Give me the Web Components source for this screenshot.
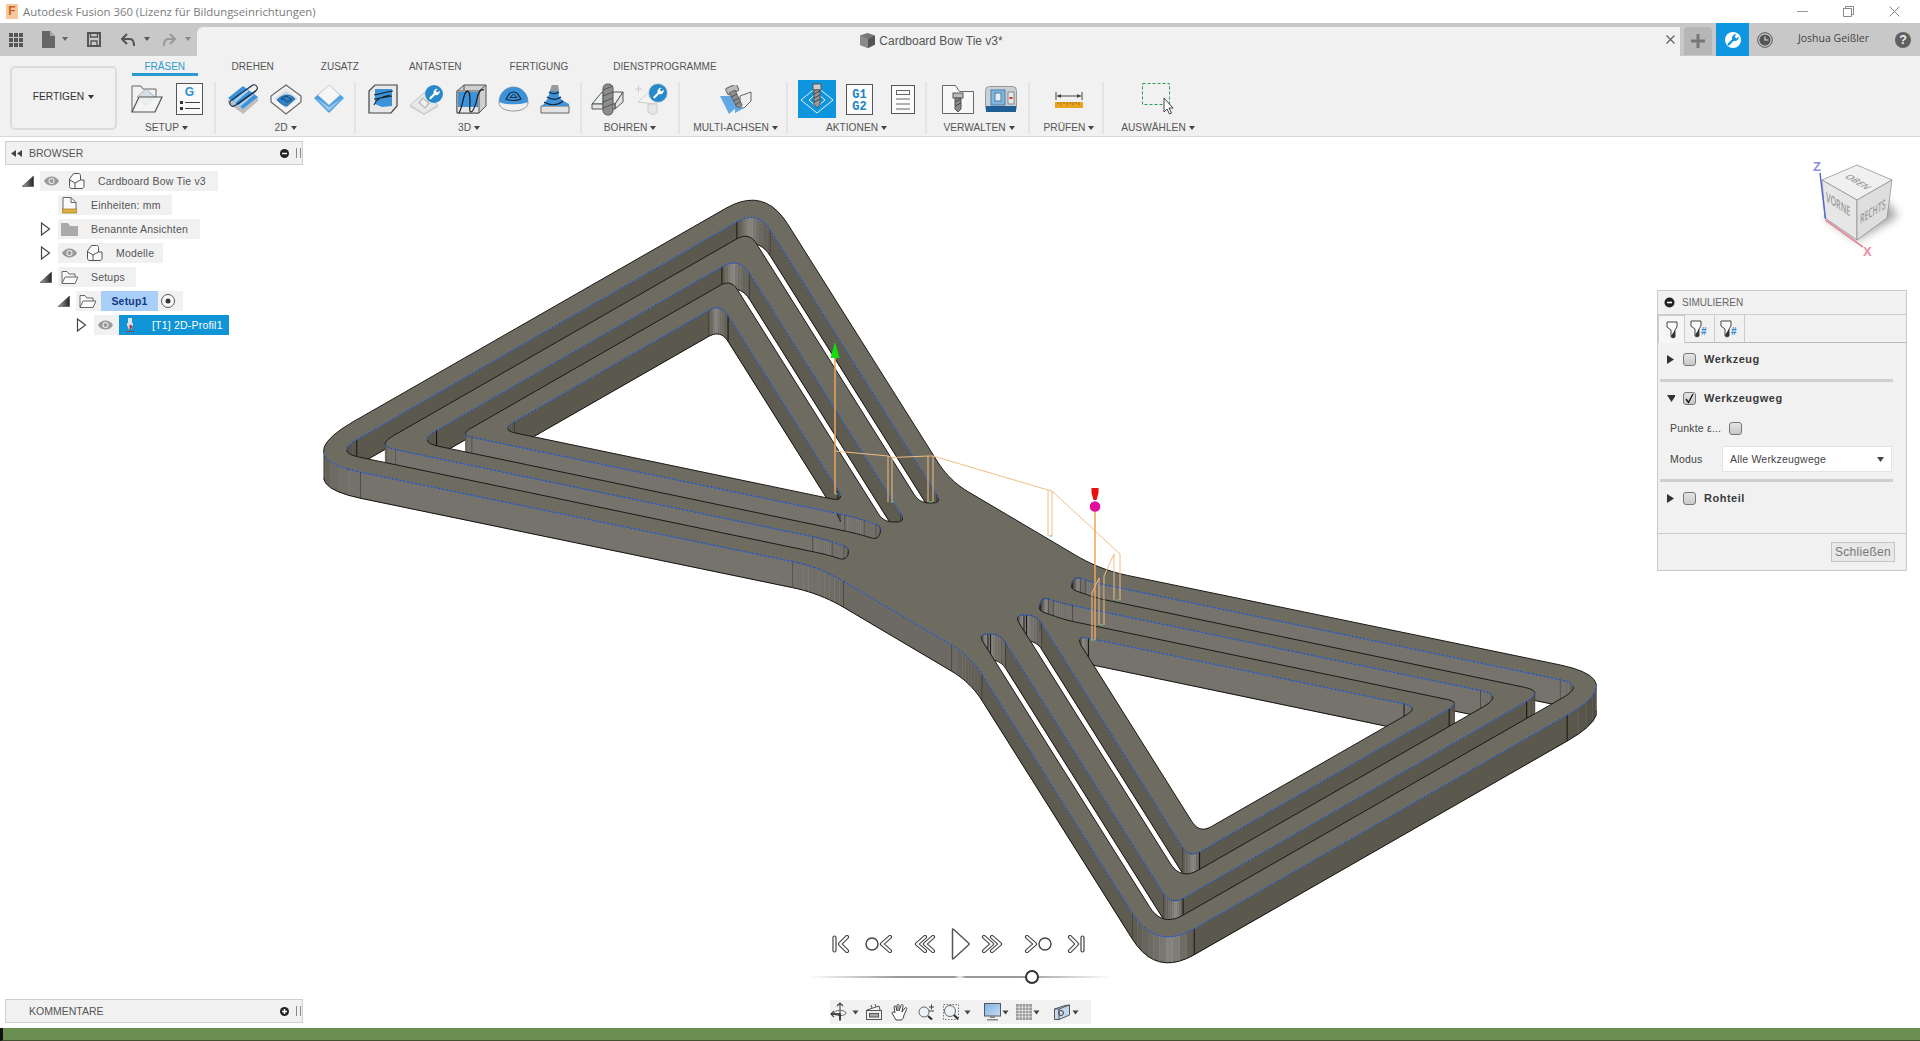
<!DOCTYPE html>
<html lang="de">
<head>
<meta charset="utf-8">
<title>Autodesk Fusion 360</title>
<style>
  html, body { margin: 0; height: 100%; overflow: hidden; background: #fff; }
  body { display: flex; flex-direction: column; font: 11px "Liberation Sans", Arial, sans-serif; color: #444; }
</style>
</head>
<body>
<f-titlebar></f-titlebar>
<f-topbar></f-topbar>
<f-ribbon>
  <f-tab slot="tabs" active>FRÄSEN</f-tab>
  <f-tab slot="tabs">DREHEN</f-tab>
  <f-tab slot="tabs">ZUSATZ</f-tab>
  <f-tab slot="tabs" style="margin-left:3px">ANTASTEN</f-tab>
  <f-tab slot="tabs" style="margin-left:1px">FERTIGUNG</f-tab>
  <f-tab slot="tabs" style="margin-left:-2px">DIENSTPROGRAMME</f-tab>
  <f-group label="SETUP" w="94" gap="13" style="padding-right:3px"><f-icon name="open"></f-icon><f-icon name="gdoc"></f-icon></f-group>
  <f-group label="2D" w="140" gap="11" shift="1"><f-icon name="adaptive"></f-icon><f-icon name="pocket"></f-icon><f-icon name="face"></f-icon></f-group>
  <f-group label="3D" w="226" gap="11" shift="2"><f-icon name="hex"></f-icon><f-icon name="probe"></f-icon><f-icon name="cube3"></f-icon><f-icon name="dome"></f-icon><f-icon name="stair"></f-icon></f-group>
  <f-group label="BOHREN" w="98" gap="10"><f-icon name="drill"></f-icon><f-icon name="drillplus"></f-icon></f-group>
  <f-group label="MULTI-ACHSEN" w="108" shift="5"><f-icon name="multi"></f-icon></f-group>
  <f-group label="AKTIONEN" w="139" gap="10"><f-icon name="simulate"></f-icon><f-icon name="g1g2"></f-icon><f-icon name="sheet" style="margin-left:8px"></f-icon></f-group>
  <f-group label="VERWALTEN" w="103" gap="11" shift="3"><f-icon name="toollib"></f-icon><f-icon name="machine"></f-icon></f-group>
  <f-group label="PRÜFEN" w="74" shift="6"><f-icon name="ruler"></f-icon></f-group>
  <f-group label="AUSWÄHLEN" w="108" last><f-icon name="select"></f-icon></f-group>
</f-ribbon>
<f-workspace>
  <f-panelbar title="BROWSER" back sign="minus"></f-panelbar>
  <f-tree>
    <f-tree-row depth="0" twist="open" pad="4" end="12"><f-icon name="eye"></f-icon><f-icon name="part" style="margin-left:10px"></f-icon><span style="margin-left:13px">Cardboard Bow Tie v3</span></f-tree-row>
    <f-tree-row depth="1" pad="4" end="11"><f-icon name="units"></f-icon><span style="margin-left:14px">Einheiten: mm</span></f-tree-row>
    <f-tree-row depth="1" twist="closed" pad="3" end="12"><f-icon name="folder"></f-icon><span style="margin-left:13px">Benannte Ansichten</span></f-tree-row>
    <f-tree-row depth="1" twist="closed" pad="4" end="9"><f-icon name="eye"></f-icon><f-icon name="part" style="margin-left:10px"></f-icon><span style="margin-left:13px">Modelle</span></f-tree-row>
    <f-tree-row depth="1" twist="open" pad="3" end="11"><f-icon name="folderopen"></f-icon><span style="margin-left:13px">Setups</span></f-tree-row>
    <f-tree-row depth="2" twist="open" pad="3" end="7"><f-icon name="folderopen"></f-icon><span style="margin-left:5px;width:57px;height:20px;line-height:20px;background:#a9cff9;color:#123a80;font-weight:bold;text-align:center">Setup1</span><f-icon name="radio" style="margin-left:2px"></f-icon></f-tree-row>
    <f-tree-row depth="3" twist="closed" pad="4" end="0"><f-icon name="eye"></f-icon><span style="margin-left:6px;width:110px;height:20px;background:#0f94d6;color:#fff;display:flex;align-items:center"><f-icon name="tool1" style="margin-left:7px"></f-icon><span style="margin-left:18px">[T1] 2D-Profil1</span></span></f-tree-row>
  </f-tree>
  <f-panelbar title="KOMMENTARE" sign="plus" slot="bottom"></f-panelbar>
</f-workspace>
<f-taskbar></f-taskbar>

<script>
const caret = (x, y, c = '#555') => `<path d="M${x} ${y}h6l-3 4z" fill="${c}"/>`
const chev = (d) => `<path d="${d}" fill="none" stroke="#444" stroke-width="4.2" stroke-linecap="round" stroke-linejoin="round"/><path d="${d}" fill="none" stroke="#fff" stroke-width="2" stroke-linecap="round" stroke-linejoin="round"/>`
const BLUE = '#3d92d8'

// every icon: [width, height, svg body]
const ICONS = {
  grid: [15, 14, [0, 5, 10].map(x => [0, 5, 10].map(y => `<rect x="${x}" y="${y}" width="4" height="4" fill="#555"/>`).join('')).join('')],
  file: [30, 17, `<path d="M0 0h8l5 5v12H0z" fill="#666"/><path d="M8 0v5h5" fill="#aaa"/>` + caret(20, 6, '#666')],
  save: [14, 15, `<path d="M1 1h12v13H1z" fill="none" stroke="#555" stroke-width="2"/><path d="M3.500 1h7v4h-7zM4 9h6v5H4z" fill="none" stroke="#555" stroke-width="1.4"/>`],
  undo: [32, 14, `<path d="M6 1 1 6l5 5M2 6h7c3 0 4 3 4 7" fill="none" stroke="#555" stroke-width="2"/>` + caret(23, 4)],
  redo: [32, 14, `<path d="M8 1l5 5-5 5M12 6H6C3 6 2 9 2 13" fill="none" stroke="#999" stroke-width="2"/>` + caret(23, 4, '#888')],
  box: [15, 15, `<path d="M7.500 0 15 2.500v9L8 15 0 12V2.500z" fill="#777"/><path d="M0 2.500 8 6v9l-8-3z" fill="#8b8b8b"/><path d="M8 6l7-3.500v9L8 15z" fill="#555"/>`],
  clock: [16, 16, `<circle cx="8" cy="8" r="7.300" fill="none" stroke="#555"/><circle cx="8" cy="8" r="5.600" fill="#555"/><path d="M8 4.500V8h3.500" fill="none" stroke="#ddd" stroke-width="1.200"/>`],
  wrench: [18, 18, `<circle cx="9" cy="9" r="8" fill="#fff"/><path d="M12.500 3.500a3.600 3.600 0 0 0-4.300 4.700l-4.400 4.400a1 1 0 0 0 1.600 1.600l4.400-4.400a3.600 3.600 0 0 0 4.700-4.300L12.400 7.600 10.400 5.600z" fill="#0e96e0"/>`],
  help: [16, 16, `<circle cx="8" cy="8" r="8" fill="#606060"/><text x="8" y="12.400" font-size="12.500" font-weight="bold" font-family="Liberation Sans" text-anchor="middle" fill="#eee">?</text>`],
  open: [32, 28, `<path d="M1 27V1h9l2 3h13v8" fill="none" stroke="#666"/><path d="M15 4 6 12l9 8 9-8z" fill="#d4dfe8" stroke="#999" stroke-width=".7"/><path d="M1 27 8 12h23l-7 15z" fill="#f4f4f4" fill-opacity=".75" stroke="#555" stroke-width="1.200"/>`],
  gdoc: [27, 32, `<rect x=".5" y=".5" width="26" height="31" fill="#fafafa" stroke="#555"/><text x="13.500" y="13" font-size="12" font-weight="bold" font-family="Liberation Sans" text-anchor="middle" fill="#2a8fd0">G</text><path d="M9 19.500h15M9 25.500h15" stroke="#444"/><rect x="4" y="18" width="3" height="3" fill="#333"/><rect x="4" y="24" width="3" height="3" fill="#333"/>`],
  adaptive: [32, 31, `<path d="M1 19 16 30 31 17v-4L16 25 1 15z" fill="#bdbdbd"/><path d="M1 14 16 2l15 11-15 12z" fill="${BLUE}"/><path d="M7 18 21 6M12 22 26 10" stroke="#a8cfee" stroke-width="2.500"/><path d="M25 1.500 4 16.500a3 3 0 0 0 4 5L29 6.500a3 3 0 0 0-4-5zM8 13.500 26 1M11 20 29 7" fill="none" stroke="#16324e" stroke-width="1.100"/>`],
  pocket: [32, 31, `<path d="M16 1 31 12v6L16 30 1 18v-6z" fill="#f5f5f5" stroke="#666" stroke-width="1.200"/><path d="M16 4 28 14 16 25 4 14z" fill="#e6e6e6"/><path d="M16 8 27 15 16 24 5 15z" fill="#bcd6ec"/><path d="M7 16c4-4 7-5 10-5s6 1 8 4l-8 7c-3 0-6-2-10-6z" fill="#2f82c4" stroke="#1d4f80" stroke-width=".6"/><path d="M11 15c3-2 5-3 6-3 2 3 4 3 5 3-2 2-4 3-5 3-2-3-4-3-6-3z" fill="none" stroke="#12406a"/>`],
  face: [32, 29, `<path d="M16 0 31 13 16 28 1 13z" fill="#4d9fe0"/><path d="M16 0 27 10 16 20 5 10z" fill="#f6f6f6" stroke="#c8c8c8" stroke-width=".6"/><path d="M16 22 3 13l13 13 13-13z" fill="#9cc9ec"/>`],
  hex: [30, 30, `<path d="M1 7 7 1h22v21l-6 7H1z" fill="#e8e8e8" stroke="#444" stroke-width="1.200"/><path d="M7 5h17v17l-10 1-7-3z" fill="${BLUE}"/><path d="M6 11c6-1 12-3 19-4M6 15c4 0 10-2 18-3M6 21c1-4 5-8 16-10" fill="none" stroke="#122" stroke-width="1.100"/>`],
  probe: [36, 31, `<path d="M1 21 15 9l14 12-14 9z" fill="#e8e8e8" stroke="#c4c4c4"/><path d="M1 21l14 9 14-9v2l-14 8-14-8z" fill="#cfcfcf"/><rect x="11" y="16" width="8" height="6" transform="rotate(40 15 19)" fill="#eee" stroke="#aaa"/><circle cx="25" cy="10" r="9" fill="#2789c9"/><path d="M29 5a3.600 3.600 0 0 0-4.400 4.600l-4 4a1 1 0 0 0 1.500 1.500l4-4a3.600 3.600 0 0 0 4.500-4.500L28.500 8.500l-1.900-1.900z" fill="#fff"/>`],
  cube3: [31, 30, `<path d="M1 7 8 1h22v21l-7 7H1z" fill="#cfcfcf" stroke="#555"/><path d="M1 7h22v22H1zM23 7l7-6" fill="#e6e6e6" stroke="#555"/><path d="M2 8h20v15H2z" fill="${BLUE}"/><path d="M8 1v5" stroke="#555"/><path d="M3 29c4-7 4-18 7-21s4 2 4 9-1 11 1 11 5-8 6-13 3-11 7-9" fill="none" stroke="#111" stroke-width="1.100"/>`],
  dome: [31, 26, `<path d="M1 17C1 7 8 1 15.500 1S30 7 30 17c0 5-7 8-14.500 8S1 22 1 17z" fill="#f0f0f0" stroke="#999"/><path d="M1 16C1 7 8 1 15.500 1S30 7 30 16c-6 3-23 3-29 0z" fill="${BLUE}"/><path d="M8 13c3-5 4-7 7.500-7S20 8 23 13c-4 2-11 2-15 0z" fill="none" stroke="#123" stroke-width="1.100"/><path d="M12 11.500 15.500 8 19 11.500z" fill="none" stroke="#123" stroke-width=".9"/>`],
  stair: [30, 30, `<path d="M1 22h28v7H1z" fill="#e2e2e2" stroke="#666"/><path d="M2 22c3-3 6-7 7-12l3-9h6l1 11c2 4 6 6 10 8v2z" fill="${BLUE}"/><path d="M12 1h6l1 6H10z" fill="#9a9a9a"/><path d="M7 13c5 3 10 3 14 0M9 8c3 2 7 2 10 0M4 18c7 4 14 3 19-1" fill="none" stroke="#123" stroke-width="1.100"/>`],
  drill: [33, 33, `<path d="M1 21 11 9h21l-8 12z" fill="#efefef" stroke="#555"/><path d="M1 21h23v5H1zM24 26l8-7V9l-8 12z" fill="#e4e4e4" stroke="#555"/><path d="M12 9h9v17h-9z" fill="#d6e8f6" stroke="#2a8fd0"/><rect x="12" y="1" width="10" height="31" rx="4.500" fill="#8d8d8d" stroke="#555"/><path d="M12 7l10-4M12 13l10-4M12 19l10-4M12 25l10-4" stroke="#555" fill="none"/>`],
  drillplus: [35, 33, `<path d="M4 19 13 11h16l-7 10z" fill="#f4f4f4" stroke="#d0d0d0"/><path d="M14 21h9v8l-4 3-5-3z" fill="#e6e6e6" stroke="#ccc"/><path d="M1 6h7M4.500 2.500v7" stroke="#ccc"/><circle cx="24" cy="10" r="9.500" fill="#2789c9" stroke="#ddd"/><path d="M28 5a3.600 3.600 0 0 0-4.400 4.600l-4 4a1 1 0 0 0 1.500 1.500l4-4a3.600 3.600 0 0 0 4.500-4.500L27.500 8.500l-1.900-1.900z" fill="#fff"/>`],
  multi: [33, 29, `<path d="M1 11h13l4 11-8 7z" fill="#62a8e4"/><path d="M21 11 32 7v9l-7 7h-4z" fill="#eee" stroke="#666"/><path d="M16 12l5 10 4 1-9 5z" fill="#62a8e4"/><rect x="7" y="1" width="12" height="7" rx="1.500" transform="rotate(-25 13 4)" fill="#bbb" stroke="#666"/><path d="M10 8 16 5l7 15c0 2-3 3-5 2z" fill="#8d8d8d" stroke="#666"/><path d="M12 12l6-3M14 16l6-3M16 20l5-3" stroke="#555" fill="none"/>`],
  simulate: [38, 38, `<rect width="38" height="38" fill="#0f94de"/><path d="M19 7 35 20 19 33 3 20z" fill="none" stroke="#e7f3fb"/><path d="M19 13 27 20 19 27 11 20z" fill="none" stroke="#e7f3fb"/><rect x="15" y="4" width="8" height="6" fill="#ccc" stroke="#555"/><path d="M16 10h6v14l-3 4-3-4z" fill="#999" stroke="#555"/><path d="M16 14l6-3M16 18l6-3M16 22l6-3" stroke="#444"/>`],
  g1g2: [27, 31, `<rect x=".5" y=".5" width="26" height="30" fill="#fbfbfb" stroke="#555"/><text x="13.500" y="14" font-size="12" font-weight="bold" font-family="Liberation Mono" text-anchor="middle" fill="#1d84c4">G1</text><text x="13.500" y="26" font-size="12" font-weight="bold" font-family="Liberation Mono" text-anchor="middle" fill="#1d84c4">G2</text>`],
  sheet: [24, 29, `<rect x=".5" y=".5" width="23" height="28" fill="#fbfbfb" stroke="#555"/><rect x="5.500" y="5.500" width="13" height="4" fill="none" stroke="#666"/><path d="M5 14h14M5 19h14M5 24h14" stroke="#666"/>`],
  toollib: [32, 29, `<path d="M.5 28.500V.5h13l4 6h14v22z" fill="#f7f7f7" stroke="#666"/><rect x="11" y="8" width="10" height="5" fill="#bbb" stroke="#555"/><path d="M13 13h6v11l-3 3-3-3z" fill="#888" stroke="#555"/><path d="M13 17l6-3M13 21l6-3" stroke="#444"/>`],
  machine: [32, 26, `<rect x=".5" y=".5" width="31" height="25" rx="4" fill="#c9d0d6" stroke="#999"/><rect x="1" y="20" width="30" height="6" fill="#1f5f96"/><rect x="6" y="4" width="14" height="15" fill="#7fb6df" stroke="#4f7ea3"/><rect x="10" y="7" width="6" height="8" fill="#e6eef5" stroke="#4f7ea3"/><rect x="23" y="6" width="6" height="12" fill="#e8e8e8" stroke="#888"/><rect x="24.500" y="11" width="3" height="2" fill="#c33"/>`],
  ruler: [28, 17, `<path d="M1 1v8M27 1v8M2 5h24" stroke="#444" fill="none"/><path d="M2 5l4-2v4zM26 5l-4-2v4z" fill="#444"/><rect y="11" width="28" height="6" fill="#e8a320"/><path d="M3 11v2M6 11v3M9 11v2M12 11v3M15 11v2M18 11v3M21 11v2M24 11v3" stroke="#8a5b10" stroke-width=".7"/>`],
  select: [32, 32, `<rect x=".5" y=".5" width="27" height="21" fill="none" stroke="#2e9a55" stroke-dasharray="3 2"/><path d="M22 15v14l3-3 2.500 5 2-1-2.500-5h4z" fill="#fff" stroke="#444"/>`],
  eye: [15, 10, `<path d="M0 5c3-6 12-6 15 0-3 6-12 6-15 0z" fill="#999"/><circle cx="7.500" cy="5" r="3" fill="#eee"/><circle cx="7.500" cy="5" r="2" fill="#999"/>`],
  part: [16, 16, `<path d="M3 15.500c-2 0-2.500-1-2.500-2V6l4-5.500h5c1.500 0 2 1 2 2V7H15v6.500c0 1-1 2-2 2zM6 15.500V10l5.500-3M6 10 1 7" fill="#fafafa" stroke="#555"/>`],
  units: [15, 17, `<path d="M1 12V.5h8l5 5V12" fill="#fafafa" stroke="#666"/><path d="M9 .5v5h5" fill="none" stroke="#666"/><rect y="12" width="15" height="4" fill="#e2b040" stroke="#8a6a10" stroke-width=".6"/>`],
  folder: [17, 13, `<path d="M0 0h7l2 3h8v10H0z" fill="#aaa"/>`],
  folderopen: [17, 13, `<path d="M1 12V.5h5l2 2.500h6v3" fill="#fafafa" stroke="#666"/><path d="M1 12.500 4 6h13l-3 6.500z" fill="#fafafa" stroke="#666"/>`],
  radio: [16, 16, `<circle cx="8" cy="8" r="6.500" fill="#fafafa" stroke="#555"/><circle cx="8" cy="8" r="2.500" fill="#333"/>`],
  tool1: [8, 15, `<rect x="2" y="0" width="4" height="5" fill="#d8e8f2"/><path d="M1 5h6v2L5 12H3L1 7z" fill="#ddd"/><path d="M4 7l2 1-2 4zM0 13.500h8" stroke="#aa3030" fill="#aa3030" stroke-width=".8"/>`],
  orbit: [20, 20, `<path d="M10 1v18M4 9l-3 3 3 3M7 4l3-3 3 3" fill="none" stroke="#444" stroke-width="1.100"/><ellipse cx="10" cy="11" rx="6" ry="2.600" fill="none" stroke="#666"/><path d="M1 12h9v6" fill="none" stroke="#222" stroke-width="1.400"/>`],
  lookat: [16, 16, `<rect x=".5" y="6.500" width="15" height="9" fill="#eee" stroke="#555"/><rect x="3.500" y="9.500" width="9" height="3.500" fill="#aaa" stroke="#555"/><path d="M1 6 13 2l1 4M5 1l1 3M9 0l1 3" fill="none" stroke="#555"/>`],
  hand: [17, 17, `<path d="M5 16 1 9c0-2 2-1 3 0L3 3c0-1.500 2-1.500 2 0l1 4V1.500C6 0 8 0 8 1.500V7l2-5.500c.5-1.500 2.500-1 2 .5L11 8l3-4c1-1 2.500 0 1.500 1.500L13 11c-.5 3-1.500 5-3 5z" fill="#fff" stroke="#444"/>`],
  zoom: [17, 16, `<circle cx="6" cy="8" r="5" fill="#eef3f7" stroke="#666"/><path d="M10 12l4 3.500" stroke="#333" stroke-width="2.200"/><path d="M11 3h5M13.500 .5v5M11 7h5" stroke="#444" fill="none"/>`],
  zoomfit: [17, 17, `<rect x=".5" y=".5" width="15" height="15" fill="none" stroke="#777" stroke-dasharray="1.500 1.500"/><circle cx="7" cy="7" r="5.500" fill="#eef3f7" stroke="#666"/><path d="M11 11l4 4" stroke="#333" stroke-width="2.200"/>`],
  display: [17, 18, `<defs><linearGradient id="d" x1="0" y1="0" x2="1" y2="1"><stop offset="0" stop-color="#7fb0e0"/><stop offset="1" stop-color="#c9def2"/></linearGradient></defs><rect x=".5" y=".5" width="16" height="12.500" fill="url(#d)" stroke="#556"/><path d="M6 13h5v2H6zM3 16h11v1.500H3z" fill="#888"/>`],
  gridbtn: [16, 16, `<rect width="16" height="16" fill="#999"/><path d="M3.200 0v16M6.400 0v16M9.600 0v16M12.800 0v16M0 3.200h16M0 6.400h16M0 9.600h16M0 12.800h16" stroke="#eee" stroke-width=".7"/>`],
  viewbox: [16, 16, `<path d="M.5 5 11 1.500 15.500 1v10L5 15.500H.5z" fill="#c2d8ec" stroke="#555"/><path d="M.5 5H5v10.500M5 5 15.500 1" fill="none" stroke="#555"/><circle cx="7" cy="9" r="2.500" fill="none" stroke="#444"/>`],
  start: [18, 18, `<rect x="1" y="1" width="3" height="16" rx="1.500" fill="#fff" stroke="#444" stroke-width="1.200"/>` + chev('M15 2 8 9l7 7')],
  prevop: [28, 18, `<circle cx="7" cy="9" r="6" fill="none" stroke="#444" stroke-width="1.400"/>` + chev('M25 2 17 9l8 7')],
  rew: [23, 18, chev('M12 2 4 9l8 7') + chev('M20 2 12 9l8 7')],
  play: [19, 32, `<path d="M1.500 1.500c0-.5.5-.5 1-.2L17.500 15c.8.700.8 1.300 0 2L2.500 30.700c-.5.300-1 .3-1-.2z" fill="#fff" stroke="#555" stroke-width="1.500"/>`],
  fwd: [23, 18, chev('M3 2l8 7-8 7') + chev('M11 2l8 7-8 7')],
  nextop: [28, 18, chev('M3 2l8 7-8 7') + `<circle cx="21" cy="9" r="6" fill="none" stroke="#444" stroke-width="1.400"/>`],
  end: [18, 18, chev('M3 2l7 7-7 7') + `<rect x="14" y="1" width="3" height="16" rx="1.500" fill="#fff" stroke="#444" stroke-width="1.200"/>`],
  cap: [7, 5, caret(.5, .5, '#444')],
}

class FIcon extends HTMLElement {
  connectedCallback() {
    const [w, h, body] = ICONS[this.getAttribute('name')]
    if (!this.shadowRoot) this.attachShadow({ mode: 'open' })
    this.shadowRoot.innerHTML = `<style>:host{display:inline-flex;flex:none;line-height:0}</style>
      <svg width="${w}" height="${h}" viewBox="0 0 ${w} ${h}">${body}</svg>`
  }
}
customElements.define('f-icon', FIcon)

class FTitlebar extends HTMLElement {
  constructor() {
    super()
    this.attachShadow({ mode: 'open' }).innerHTML = `
      <style>
        :host { display: flex; align-items: center; height: 23px; flex: none; background: #fff; padding-left: 6px; font: 11.350px "Open Sans", sans-serif; color: #7a7a7a; }
        .logo { width: 12px; height: 15px; background: #f6c79a; margin-right: 5px; color: #c8641a; font: bold 12px/15px "Liberation Sans"; text-align: center; }
        .title { flex: 1; }
        .win { display: flex; gap: 35px; padding-right: 20px; }
      </style>
      <span class="logo">F</span><span class="title">Autodesk Fusion 360 (Lizenz für Bildungseinrichtungen)</span>
      <span class="win">
        <svg width="11" height="11"><path d="M0 5.500h11" stroke="#999"/></svg>
        <svg width="11" height="11"><path d="M.5 2.500h8v8h-8zM2.500 2.500v-2h8v8h-2" fill="none" stroke="#888"/></svg>
        <svg width="11" height="11"><path d="M.5.500l10 10M10.500.500l-10 10" stroke="#888"/></svg>
      </span>`
  }
}
customElements.define('f-titlebar', FTitlebar)

class FTopbar extends HTMLElement {
  constructor() {
    super()
    this.attachShadow({ mode: 'open' }).innerHTML = `
      <style>
        :host { display: flex; height: 33px; flex: none; background: #c8c8c8; color: #444; }
        .tools { width: 197px; display: flex; align-items: center; padding-left: 9px; box-sizing: border-box; }
        .doc { flex: 1; margin-top: 4px; background: #f1f1f1; border-radius: 6px 0 0 0; display: flex; align-items: center; justify-content: center; position: relative; font-size: 12px; color: #555; gap: 4px; padding: 0 14px 2px 0; }
        .x { position: absolute; right: 5px; top: 8px; }
        .plus { width: 28px; margin: 4px 4px 1px; background: #b6b6b6; border-radius: 4px 4px 0 0; display: flex; align-items: center; justify-content: center; }
        .job { width: 33px; background: #0e96e0; display: flex; align-items: center; justify-content: center; }
        .name { width: 94px; text-align: center; font: 10.500px/30px "Open Sans", sans-serif; color: #444; margin-left: 13.500px; }
        .right { display: flex; align-items: center; }
      </style>
      <span class="tools">
        <f-icon name="grid"></f-icon>
        <f-icon name="file" style="margin-left:18px"></f-icon>
        <f-icon name="save" style="margin-left:15px"></f-icon>
        <f-icon name="undo" style="margin-left:20px"></f-icon>
        <f-icon name="redo" style="margin-left:9px"></f-icon>
      </span>
      <span class="doc"><f-icon name="box"></f-icon>Cardboard Bow Tie v3*
        <svg class="x" width="9" height="9"><path d="M.5.500l8 8M8.500.500l-8 8" stroke="#666" stroke-width="1.300"/></svg>
      </span>
      <span class="plus"><svg width="14" height="14"><path d="M7 0v14M0 7h14" stroke="#777" stroke-width="3"/></svg></span>
      <span class="job"><f-icon name="wrench"></f-icon></span>
      <span class="right" style="padding-left:8px"><f-icon name="clock"></f-icon></span>
      <span class="name">Joshua Geißler</span>
      <span class="right" style="padding:0 9px 0 14.500px"><f-icon name="help"></f-icon></span>`
  }
}
customElements.define('f-topbar', FTopbar)

class FRibbon extends HTMLElement {
  constructor() {
    super()
    this.attachShadow({ mode: 'open' }).innerHTML = `
      <style>
        :host { display: flex; flex: none; height: 81px; box-sizing: border-box; background: #f1f1f1; border-bottom: 1px solid #d9d9d9; padding-left: 10px; }
        .mode { width: 103px; height: 56px; margin-top: 10px; padding-bottom: 4px; box-sizing: content-box; border: 2px solid #dcdcdc; border-radius: 5px; display: flex; align-items: center; justify-content: center; gap: 4px; font-size: 10.200px; color: #333; }
        .mode i { border: 3px solid transparent; border-top: 4px solid #333; border-bottom: 0; margin-top: 1px; }
        .col { display: flex; flex-direction: column; margin-left: 5px; }
        .tabs { display: flex; gap: 21px; height: 21px; margin-top: 3px; }
        .groups { display: flex; flex: 1; }
      </style>
      <div class="mode">FERTIGEN <i></i></div>
      <div class="col">
        <div class="tabs"><slot name="tabs"></slot></div>
        <div class="groups"><slot></slot></div>
      </div>`
  }
}
customElements.define('f-ribbon', FRibbon)

class FTab extends HTMLElement {
  constructor() {
    super()
    this.attachShadow({ mode: 'open' }).innerHTML = `
      <style>
        :host { display: block; padding: 1px 13px 0; font-size: 10px; line-height: 13px; color: #555; height: 17px; box-sizing: border-box; }
        :host([active]) { color: #2a9ad0; border-bottom: 3px solid #2a9ad0; margin-left: 10px; padding: 1px 12.500px 0; }
      </style><slot></slot>`
  }
}
customElements.define('f-tab', FTab)

class FGroup extends HTMLElement {
  constructor() {
    super()
    this.attachShadow({ mode: 'open' }).innerHTML = `
      <style>
        :host { display: flex; flex-direction: column; box-sizing: border-box; border-right: 2px solid #e4e4e4; margin: 2px 0; height: 52px; }
        :host([last]) { border-right: 0; }
        .icons { height: 40px; margin-top: -3px; display: flex; align-items: center; justify-content: center; }
        .label { font-size: 10.200px; line-height: 13px; color: #555; display: flex; justify-content: center; align-items: center; gap: 3px; margin-top: 2px; }
        .label i { border: 3px solid transparent; border-top: 4px solid #444; border-bottom: 0; }
      </style>
      <div class="icons"><slot></slot></div>
      <div class="label"><span class="t"></span><i></i></div>`
  }
  connectedCallback() {
    this.shadowRoot.querySelector('.t').textContent = this.getAttribute('label')
    this.style.width = this.getAttribute('w') + 'px'
    this.style.paddingLeft = (this.getAttribute('shift') || 0) + 'px'
    this.shadowRoot.querySelector('.icons').style.gap = (this.getAttribute('gap') || 0) + 'px'
  }
}
customElements.define('f-group', FGroup)

class FWorkspace extends HTMLElement {
  constructor() {
    super()
    this.attachShadow({ mode: 'open' }).innerHTML = `
      <style>
        :host { display: block; flex: 1; position: relative; background: #fff; overflow: hidden; }
        .left { position: relative; width: 298px; height: 100%; margin-left: 5px; padding: 4px 0 5px; box-sizing: border-box; display: flex; flex-direction: column; justify-content: space-between; }
      </style>
      <f-model></f-model>
      <f-viewcube></f-viewcube>
      <f-simulate></f-simulate>
      <f-player></f-player>
      <div class="left">
        <div><slot></slot></div>
        <slot name="bottom"></slot>
      </div>`
  }
}
customElements.define('f-workspace', FWorkspace)

class FPanelbar extends HTMLElement {
  constructor() {
    super()
    this.attachShadow({ mode: 'open' }).innerHTML = `
      <style>
        :host { display: flex; align-items: center; height: 24px; background: #f1f1f1; border: 1px solid #cfcfcf; box-sizing: border-box; color: #555; font-size: 10.500px; }
        .back { width: 23px; flex: none; padding-left: 5px; box-sizing: border-box; line-height: 0; }
        .t { flex: 1; }
        .pin { width: 3px; height: 10px; border-left: 1px solid #888; border-right: 1px solid #888; margin: 0 1px 0 7px; }
      </style>
      <span class="back"></span><span class="t"></span>
      <svg class="sign" width="9" height="9"></svg><span class="pin"></span>`
  }
  connectedCallback() {
    const s = this.shadowRoot
    s.querySelector('.t').textContent = this.getAttribute('title')
    if (this.hasAttribute('back')) s.querySelector('.back').innerHTML = '<svg width="11" height="7"><path d="M5 0v7L0 3.500zM11 0v7L6 3.500z" fill="#444"/></svg>'
    const bar = this.getAttribute('sign') === 'plus' ? 'M2 4.500h5M4.500 2v5' : 'M2 4.500h5'
    s.querySelector('.sign').innerHTML = `<circle cx="4.500" cy="4.500" r="4.500" fill="#222"/><path d="${bar}" stroke="#fff" stroke-width="1.500"/>`
  }
}
customElements.define('f-panelbar', FPanelbar)

class FTree extends HTMLElement {
  constructor() {
    super()
    this.attachShadow({ mode: 'open' }).innerHTML = `<style>:host{display:block;margin-top:4px}</style><slot></slot>`
  }
}
customElements.define('f-tree', FTree)

class FTreeRow extends HTMLElement {
  constructor() {
    super()
    this.attachShadow({ mode: 'open' }).innerHTML = `
      <style>
        :host { display: flex; align-items: center; height: 24px; color: #555; letter-spacing: .2px; font-size: 10.500px; }
        .tw { width: 18px; flex: none; line-height: 0; }
        .bg { display: flex; align-items: center; height: 20px; background: #f1f1f1; }
      </style>
      <span class="tw"></span><span class="bg"><slot></slot></span>`
  }
  connectedCallback() {
    const s = this.shadowRoot
    const depth = +this.getAttribute('depth')
    this.style.paddingLeft = 17 + depth * 18 + 'px'
    const bg = s.querySelector('.bg')
    bg.style.paddingLeft = this.getAttribute('pad') + 'px'
    bg.style.paddingRight = this.getAttribute('end') + 'px'
    const tw = this.getAttribute('twist')
    if (tw === 'open') s.querySelector('.tw').innerHTML = '<svg width="12" height="12"><defs><linearGradient id="g" x1="0" x2="1"><stop offset="0" stop-color="#aaa"/><stop offset="1" stop-color="#222"/></linearGradient></defs><path d="M0 11.500 11.500 1v10.500z" fill="url(#g)" stroke="#444" stroke-width=".6"/></svg>'
    if (tw === 'closed') s.querySelector('.tw').innerHTML = '<svg width="12" height="14"><path d="M1.500 1 9.500 7l-8 6z" fill="#fff" stroke="#444" stroke-width="1.200"/></svg>'
  }
}
customElements.define('f-tree-row', FTreeRow)

class FCheck extends HTMLElement {
  constructor() {
    super()
    this.attachShadow({ mode: 'open' }).innerHTML = `
      <style>:host{display:inline-flex;flex:none;width:13px;height:13px;box-sizing:border-box;border:1px solid #777;border-radius:3px;background:linear-gradient(#e4e4e4,#c8c8c8);line-height:0}</style>
      <svg width="11" height="11"></svg>`
  }
  connectedCallback() {
    if (this.hasAttribute('checked')) this.shadowRoot.querySelector('svg').innerHTML = '<path d="M2 6l2.500 3.500L9 1" fill="none" stroke="#111" stroke-width="1.300"/>'
  }
}
customElements.define('f-check', FCheck)

const toolTab = (hash) => `<svg width="${hash ? 19 : 12}" height="18" viewBox="0 0 ${hash ? 19 : 12} 18"><path d="M1 1h10v5l-2 3v7c0 1-4 1-4 0V9L1 6z" fill="#fafafa" stroke="#444"/><path d="M5 15 9 9v7c-1 1-3 1-4-1z" fill="#333"/>${hash ? '<text x="11" y="15" font-size="10" font-weight="bold" font-family="Liberation Sans" fill="#2f86d6">#</text>' : ''}</svg>`

class FSimulate extends HTMLElement {
  constructor() {
    super()
    this.attachShadow({ mode: 'open' }).innerHTML = `
      <style>
        :host { position: absolute; left: 1657px; top: 153px; width: 250px; height: 281px; box-sizing: border-box; background: #f1f1f1; border: 1px solid #c9c9c9; display: flex; flex-direction: column; color: #444; font-size: 10.500px; }
        .head { height: 23px; flex: none; display: flex; align-items: center; gap: 7px; padding-left: 6px; border-bottom: 1px solid #ccc; color: #666; font-size: 10px; }
        .tabs { height: 28px; flex: none; display: flex; border-bottom: 1px solid #bbb; box-sizing: border-box; }
        .tabs span { width: 30px; display: flex; justify-content: center; align-items: center; border-right: 1px solid #ccc; box-sizing: border-box; }
        .tabs span:first-child { width: 27px; background: #f6f6f6; border-left: 1px solid #ccc; border-top: 1px solid #ccc; height: 28px; }
        .row { display: flex; align-items: center; height: 20px; padding-left: 9px; gap: 8px; font-weight: bold; font-size: 11px; color: #3a3a3a; letter-spacing: .5px; }
        .rule { height: 3px; background: #cfcfcf; margin: 0 13px 0 2px; }
        .field { display: flex; align-items: center; padding-left: 12px; letter-spacing: .2px; }
        .sel { width: 170px; height: 26px; margin-left: 21px; background: #fff; box-sizing: border-box; border: 1px solid #e3e3e3; display: flex; align-items: center; justify-content: space-between; padding: 0 7px; }
        .body { flex: 1; }
        .foot { height: 36px; flex: none; border-top: 1px solid #ccc; display: flex; align-items: center; justify-content: flex-end; padding-right: 11px; }
        button { all: unset; width: 64px; height: 20px; box-sizing: border-box; background: #e8e8e8; border: 1px solid #c4c4c4; font-size: 12px; line-height: 18px; text-align: center; color: #777; font-family: "Liberation Sans"; letter-spacing: .3px; }
        .tri { width: 8px; display: inline-flex; line-height: 0; }
      </style>
      <div class="head"><svg width="11" height="11"><circle cx="5.500" cy="5.500" r="5" fill="#222"/><path d="M3 5.500h5" stroke="#fff" stroke-width="1.600"/></svg>SIMULIEREN</div>
      <div class="tabs"><span>${toolTab(false)}</span><span>${toolTab(true)}</span><span>${toolTab(true)}</span></div>
      <div class="body">
        <div class="row" style="margin-top:6px"><span class="tri"><svg width="7" height="9"><path d="M0 0l7 4.500L0 9z" fill="#333"/></svg></span><f-check></f-check>Werkzeug</div>
        <div class="rule" style="margin-top:10px"></div>
        <div class="row" style="margin-top:6px"><span class="tri"><svg width="9" height="7"><path d="M0 0h9L4.500 7z" fill="#333"/></svg></span><f-check checked></f-check>Werkzeugweg</div>
        <div class="field" style="margin-top:8px;height:24px"><span>Punkte ε...</span><f-check style="margin-left:8px"></f-check></div>
        <div class="field" style="margin-top:6px"><span style="width:31px">Modus</span><span class="sel">Alle Werkzeugwege<svg width="7" height="5"><path d="M0 0h7L3.500 5z" fill="#444"/></svg></span></div>
        <div class="rule" style="margin-top:7px"></div>
        <div class="row" style="margin-top:6px"><span class="tri"><svg width="7" height="9"><path d="M0 0l7 4.500L0 9z" fill="#333"/></svg></span><f-check></f-check>Rohteil</div>
      </div>
      <div class="foot"><button>Schließen</button></div>`
  }
}
customElements.define('f-simulate', FSimulate)

class FPlayer extends HTMLElement {
  constructor() {
    super()
    this.attachShadow({ mode: 'open' }).innerHTML = `
      <style>
        :host { position: absolute; left: 0; right: 0; bottom: 4px; display: flex; flex-direction: column; align-items: center; }
        .btns { display: flex; align-items: center; height: 32px; padding-right: 3px; }
        .slider { width: 304px; height: 14px; margin: 10px 0 16px; position: relative; }
        .slider::before { content: ""; position: absolute; left: 0; right: 0; top: 6px; height: 2px; background: linear-gradient(90deg, #fff, #999 30%, #999 48%, #eee 50%, #999 52%, #999 70%, #fff); }
        .knob { position: absolute; left: 217px; top: 0; width: 14px; height: 14px; box-sizing: border-box; border: 2px solid #333; border-radius: 50%; background: #fff; }
        .nav { width: 261px; height: 24px; background: #f1f1f1; display: flex; align-items: center; box-sizing: border-box; }
      </style>
      <div class="btns">
        <f-icon name="start"></f-icon><f-icon name="prevop" style="margin-left:15px"></f-icon><f-icon name="rew" style="margin-left:20px"></f-icon><f-icon name="play" style="margin-left:15px"></f-icon><f-icon name="fwd" style="margin-left:11px"></f-icon><f-icon name="nextop" style="margin-left:20px"></f-icon><f-icon name="end" style="margin-left:15px"></f-icon>
      </div>
      <div class="slider"><span class="knob"></span></div>
      <div class="nav">
        <f-icon name="orbit"></f-icon><f-icon name="cap" style="margin-left:2.500px"></f-icon>
        <f-icon name="lookat" style="margin-left:6.500px"></f-icon>
        <f-icon name="hand" style="margin-left:9.500px"></f-icon>
        <f-icon name="zoom" style="margin-left:10px"></f-icon>
        <f-icon name="zoomfit" style="margin-left:8px"></f-icon><f-icon name="cap" style="margin-left:4px"></f-icon>
        <f-icon name="display" style="margin-left:13px"></f-icon><f-icon name="cap" style="margin-left:1px"></f-icon>
        <f-icon name="gridbtn" style="margin-left:6.500px"></f-icon><f-icon name="cap" style="margin-left:1.500px"></f-icon>
        <f-icon name="viewbox" style="margin-left:13.500px"></f-icon><f-icon name="cap" style="margin-left:2.500px"></f-icon>
      </div>`
  }
}
customElements.define('f-player', FPlayer)

class FViewcube extends HTMLElement {
  constructor() {
    super()
    this.attachShadow({ mode: 'open' }).innerHTML = `
      <style>:host { position: absolute; left: 1800px; top: 18px; width: 120px; height: 112px; } svg { display: block; }</style>
      <svg width="120" height="112" viewBox="1800 155 120 112" font-family="Open Sans" font-size="10" font-weight="600" fill="#999">
        <defs><filter id="b" x="-40%" y="-40%" width="180%" height="180%"><feGaussianBlur stdDeviation="5"/></filter></defs>
        <path d="M1826 218 1857 240 1898 216 1885 200 1835 205z" fill="#777" opacity=".7" filter="url(#b)"/>
        <path d="M1857 165 1892 180 1857 200 1822 180z" fill="#f0f0f0" stroke="#888" stroke-width=".7"/>
        <path d="M1822 180 1857 200 1857 240 1825 218z" fill="#e6e6e6" stroke="#888" stroke-width=".7"/>
        <path d="M1857 200 1892 180 1887 218 1857 240z" fill="#dedede" stroke="#888" stroke-width=".7"/>
        <text transform="matrix(.85 .5 -.8 .45 1844 177)" font-style="italic">OBEN</text>
        <text transform="matrix(.78 .5 0 1 1826 201) scale(.92 1.3)">VORNE</text>
        <text transform="matrix(.8 -.5 -.02 1 1860 224) scale(.86 1.3)">RECHTS</text>
        <path d="M1820 173 1825.500 219" stroke="#5a66cc" stroke-width="1.500"/>
        <path d="M1825.500 220 1863 247" stroke="#e58a9c" stroke-width="1.800"/>
        <text x="1813" y="171" font-size="13" font-weight="bold" fill="#8a8ee0" font-family="Liberation Sans">Z</text>
        <text x="1863" y="256" font-size="13" font-weight="bold" fill="#f08aa0" font-family="Liberation Sans">X</text>
      </svg>`
  }
}
customElements.define('f-viewcube', FViewcube)

// the bow tie: its outline lines are measured on the left lobe, the right lobe is its point reflection
const CX = 960, CY = 568.5, DEPTH = 26
const U = y0 => ({ a: -0.573, b: y0 + 0.573 * 565 })
const L = y0 => ({ a: 0.2085, b: y0 - 0.2085 * 565 })
const R = x0 => ({ a: 1.59, b: 390 - 1.59 * x0 })
const meet = (p, q) => { const x = (q.b - p.b) / (p.a - q.a); return [x, p.a * x + p.b] }
const atX = (l, x) => [x, l.a * x + l.b]
const atY = (l, y) => [(y - l.b) / l.a, y]
const flip = pts => pts.map(([x, y, r]) => [2 * CX - x, 2 * CY - y, r])
const rad = (p, r) => [p[0], p[1], r]

const tip = rad(meet(U(300.4), L(515)), 72), apex = rad(meet(U(300.4), R(892)), 44)
const halfOuter = [tip, apex, [949.4, 480.6, 22], [1100, 569.7, 28]]
const outer = [...halfOuter, ...flip(halfOuter)]

function channel(uo, ui, lo, li, ro, ri, endX, endY, rLeftO, rLeftI, rApexO, rApexI) {
  const lower = L(lo), upper = L(li)
  return [
    // the lower arm's slot bends down a little before its round end
    rad(atX(lower, endX - 24), 10),
    [endX - 3, lower.a * (endX - 3) + lower.b + 2, 7],
    [endX + 1, upper.a * endX + upper.b + 4, 6],
    rad(atX(upper, endX - 26), 10),
    rad(meet(U(ui), upper), rLeftI), rad(meet(U(ui), R(ri)), rApexI),
    rad(atY(R(ri), endY), 10), rad(atY(R(ro), endY), 10),
    rad(meet(U(uo), R(ro)), rApexO), rad(meet(U(uo), lower), rLeftO),
  ]
}
const ch1 = channel(320.3, 337.3, 500, 485, 871, 848.5, 849, 503, 25, 20, 24, 14)
const ch2 = channel(356.7, 374.3, 472.7, 456.7, 823, 800.5, 881, 522, 23, 13, 20, 12)
const tri = [rad(meet(U(392.7), L(443.3)), 16), rad(meet(U(392.7), R(775)), 14), rad(meet(L(443.3), R(775)), 14)]
const holes = [ch1, ch2, tri, flip(ch1), flip(ch2), flip(tri)]

function flatten(loop) {
  const out = []
  loop.forEach(([x, y, r], i) => {
    const [ax, ay] = loop[(i + loop.length - 1) % loop.length]
    const [bx, by] = loop[(i + 1) % loop.length]
    const la = Math.hypot(ax - x, ay - y), lb = Math.hypot(bx - x, by - y)
    const ta = Math.min(r, la * 0.49) / la, tb = Math.min(r, lb * 0.49) / lb
    const p0 = [x + (ax - x) * ta, y + (ay - y) * ta], p1 = [x + (bx - x) * tb, y + (by - y) * tb]
    for (let k = 0; k <= 10; k++) {
      const t = k / 10, m = 1 - t
      out.push({
        x: m * m * p0[0] + 2 * m * t * x + t * t * p1[0],
        y: m * m * p0[1] + 2 * m * t * y + t * t * p1[1],
        tan: k === 0 || k === 10,
      })
    }
  })
  return out
}

const STOPS = [[-1, [78, 75, 66]], [-0.85, [94, 91, 81]], [-0.5, [108, 106, 98]], [-0.2, [117, 115, 108]], [0.1, [138, 137, 132]], [0.5, [91, 88, 77]], [1, [76, 73, 64]]]
function wallColor(nx) {
  for (let i = 1; i < STOPS.length; i++) {
    if (nx <= STOPS[i][0]) {
      const [x0, c0] = STOPS[i - 1], [x1, c1] = STOPS[i]
      const t = (nx - x0) / (x1 - x0)
      return `rgb(${c0.map((c, j) => Math.round(c + (c1[j] - c) * t)).join(',')})`
    }
  }
  return 'rgb(76,73,64)'
}

function buildModel() {
  const quads = []
  let blue = '', black = '', top = ''
  const add = (loop, solidInside) => {
    const pts = flatten(loop)
    let area = 0
    pts.forEach((p, i) => { const q = pts[(i + 1) % pts.length]; area += p.x * q.y - q.x * p.y })
    const sign = (area > 0 ? 1 : -1) * (solidInside ? 1 : -1)
    top += 'M' + pts.map(p => `${p.x.toFixed(1)} ${p.y.toFixed(1)}`).join('L') + 'Z'
    pts.forEach((p, i) => {
      const q = pts[(i + 1) % pts.length]
      const dx = q.x - p.x, dy = q.y - p.y, len = Math.hypot(dx, dy)
      if (len < 0.01) return
      const nx = sign * dy / len, ny = -sign * dx / len
      const seg = `M${p.x.toFixed(1)} ${p.y.toFixed(1)}L${q.x.toFixed(1)} ${q.y.toFixed(1)}`
      if (ny > 0.02) {
        quads.push({
          y: Math.min(p.y, q.y),
          d: `M${p.x} ${p.y}L${q.x} ${q.y}L${q.x} ${q.y + DEPTH}L${p.x} ${p.y + DEPTH}Z`,
          edge: `M${p.x} ${p.y + DEPTH}L${q.x} ${q.y + DEPTH}` + (p.tan ? `M${p.x} ${p.y}v${DEPTH}` : ''),
          c: wallColor(nx),
        })
        blue += seg
      } else {
        black += seg
      }
    })
  }
  add(outer, true)
  holes.forEach(h => add(h, false))
  // far walls first, so a nearer wall hides the bottom edge of a farther one
  quads.sort((a, b) => a.y - b.y)
  const walls = quads.map(w => `<path d="${w.d}" fill="${w.c}" stroke="${w.c}" stroke-width=".5"/><path d="${w.edge}" fill="none" stroke="#14130f"/>`).join('')
  return `${walls}
    <path d="${top}" fill="#6e6b61" fill-rule="evenodd"/>
    <path d="${black}" fill="none" stroke="#1a1a18" stroke-width="1"/>
    <path d="${blue}" fill="none" stroke="#3866c4" stroke-width="1"/>
    <path d="${blue}" fill="none" stroke="#142a66" stroke-opacity=".6" stroke-width="1" stroke-dasharray="1 3"/>`
}

// rapid moves and plunges, read off the reference
const PATH = `
  <g fill="none" stroke="#f2bc84" stroke-width="1">
    <path d="M835 451 888 456 892 457.500 928 456 933 456 1048 490 1052 491 1120 554"/>
    <path d="M888 456V502M892 457.500V502M928 456V502M933 456V502M1048 490V536M1052 491V536"/>
    <path d="M1092 593 1099 578M1104 576 1114 554M1114 554V600M1120 554V600M1099 578V625M1104 576V625M1092 593V640"/>
  </g>
  <path d="M835 358V494M1095 510V640" stroke="#eea55c" stroke-width="1.500" fill="none"/>
  <g fill="none" stroke="#5fc890" stroke-width="1"><path d="M835 494h3M891 502h3M929 502h3M1049 536h3M1116 600h3M1100 625h3M1091 640h4"/></g>
  <path d="M835 342 839.500 358H830.500z" fill="#10e010"/>
  <path d="M1091.500 488h7v5l-2 7h-3l-2-7z" fill="#e81010"/>
  <circle cx="1095" cy="506.500" r="5.300" fill="#e0109c"/>`

class FModel extends HTMLElement {
  constructor() {
    super()
    this.attachShadow({ mode: 'open' }).innerHTML = `
      <style>:host { position: absolute; inset: 0; } svg { display: block; }</style>
      <svg width="1920" height="891" viewBox="0 137 1920 891">${buildModel()}${PATH}</svg>`
  }
}
customElements.define('f-model', FModel)

class FTaskbar extends HTMLElement {
  constructor() {
    super()
    this.attachShadow({ mode: 'open' }).innerHTML = `
      <style>
        :host { display: block; flex: none; height: 13px; box-sizing: border-box; background: #6b8e52; border-left: 3px solid #111; border-bottom: 1px solid #40522f; }
      </style>`
  }
}
customElements.define('f-taskbar', FTaskbar)
</script>
</body>
</html>
